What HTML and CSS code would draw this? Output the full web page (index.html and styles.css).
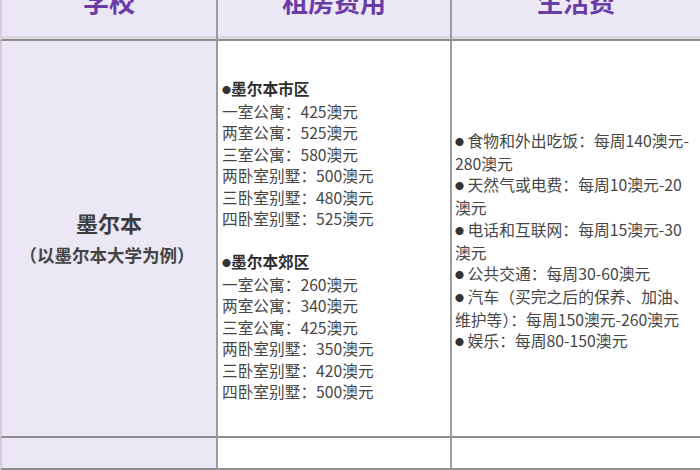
FILE: index.html
```html
<!DOCTYPE html>
<html lang="zh-CN">
<head>
<meta charset="utf-8">
<link rel="stylesheet" href="styles.css">
</head>
<body>
<div class="table">
  <div class="cell head first">学校</div>
  <div class="cell head">租房费用</div>
  <div class="cell head last">生活费</div>

  <div class="cell school first">
    <div class="city">墨尔本</div>
    <div class="note">（以墨尔本大学为例）</div>
  </div>
  <div class="cell rent">
    <div class="group">
      <div class="gtitle"><span class="dot">●</span>墨尔本市区</div>
      <div>一室公寓：425澳元</div>
      <div>两室公寓：525澳元</div>
      <div>三室公寓：580澳元</div>
      <div>两卧室别墅：500澳元</div>
      <div>三卧室别墅：480澳元</div>
      <div>四卧室别墅：525澳元</div>
    </div>
    <div class="group">
      <div class="gtitle"><span class="dot">●</span>墨尔本郊区</div>
      <div>一室公寓：260澳元</div>
      <div>两室公寓：340澳元</div>
      <div>三室公寓：425澳元</div>
      <div>两卧室别墅：350澳元</div>
      <div>三卧室别墅：420澳元</div>
      <div>四卧室别墅：500澳元</div>
    </div>
  </div>
  <div class="cell living last">
    <div class="item"><span class="dot">●</span> 食物和外出吃饭：每周140澳元-<br>280澳元</div>
    <div class="item"><span class="dot">●</span> 天然气或电费：每周10澳元-20<br>澳元</div>
    <div class="item"><span class="dot">●</span> 电话和互联网：每周15澳元-30<br>澳元</div>
    <div class="item"><span class="dot">●</span> 公共交通：每周30-60澳元</div>
    <div class="item"><span class="dot">●</span> 汽车（买完之后的保养、加油、<br>维护等）：每周150澳元-260澳元</div>
    <div class="item"><span class="dot">●</span> 娱乐：每周80-150澳元</div>
  </div>

  <div class="cell foot first"></div>
  <div class="cell foot"></div>
  <div class="cell foot last"></div>
</div>
</body>
</html>
```

FILE: styles.css
```css
html, body {
  margin: 0;
  padding: 0;
  background: #ffffff;
  overflow: hidden;
  width: 700px;
  height: 470px;
}

body {
  font-family: "Noto Sans CJK SC", "Noto Sans", sans-serif;
  color: #3a3a3a;
}

.table {
  display: grid;
  grid-template-columns: 218px 234px 1fr;
  grid-template-rows: 75px 397px 32px;
  margin-top: -34px;
}

.cell {
  box-sizing: border-box;
  border-right: 2px solid #9b9b9b;
  border-bottom: 2px solid #8e8e8e;
  background: #ffffff;
}

.cell.last {
  border-right: none;
}

.cell.first {
  border-left: 2px solid #dccbe2;
  background: #ebe7f5;
}

.head {
  background: #ece8f6;
  display: flex;
  align-items: center;
  justify-content: center;
  padding-bottom: 5px;
  color: #6a3ca6;
  font-weight: 700;
  font-size: 26px;
  box-shadow: inset 0 -3px 0 #d9d6e0;
}

.school {
  display: flex;
  flex-direction: column;
  align-items: center;
  justify-content: center;
  gap: 6px;
  padding-bottom: 4px;
  color: #3d3d3d;
  font-weight: 700;
}

.city {
  font-size: 22px;
  line-height: 30px;
}

.note {
  font-size: 17.5px;
  line-height: 24px;
  margin-left: -4px;
  color: #444444;
}

.rent {
  display: flex;
  flex-direction: column;
  justify-content: center;
  gap: 21.5px;
  padding: 4px 0 0 4px;
  font-size: 15.7px;
  line-height: 21.5px;
  color: #474747;
  white-space: nowrap;
}

.gtitle {
  font-weight: 700;
  color: #2e2e2e;
}

.dot {
  font-size: 9px;
  vertical-align: 2px;
  color: #333333;
}

.living {
  display: flex;
  flex-direction: column;
  justify-content: center;
  padding: 6px 0 0 3px;
  font-size: 15.8px;
  line-height: 21.7px;
  color: #474747;
  white-space: nowrap;
}

.foot {
  background: #ffffff;
}
```
